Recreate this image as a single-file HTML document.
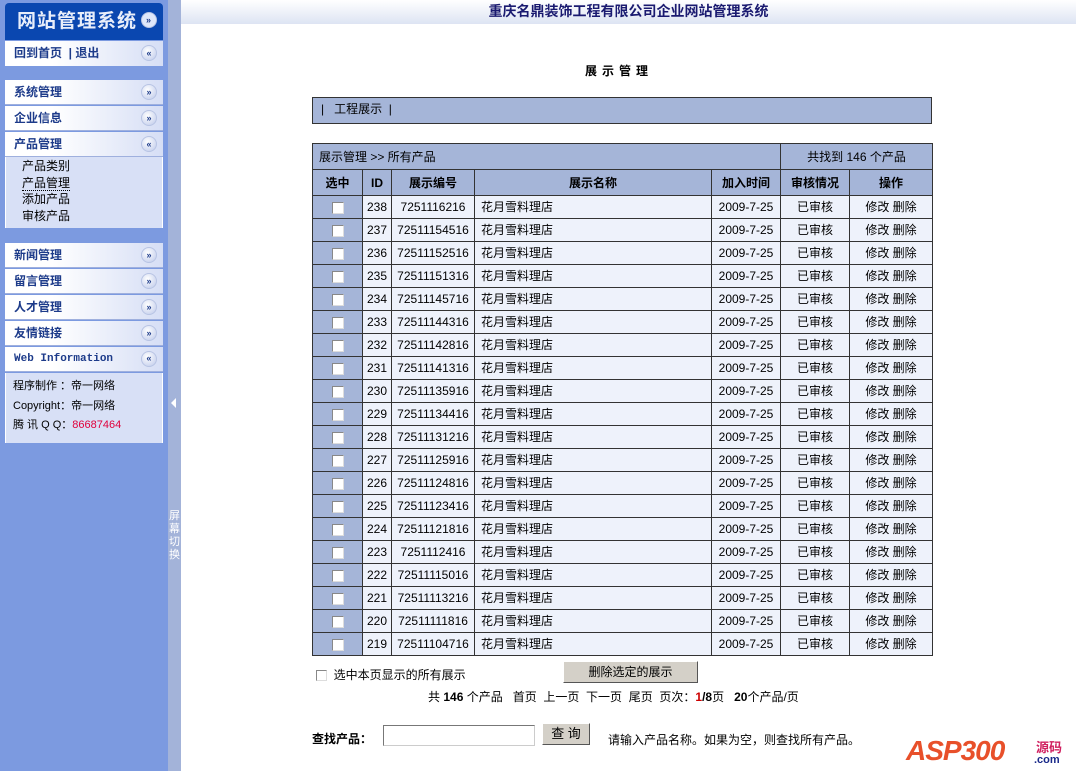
<!DOCTYPE html>
<html><head><meta charset="utf-8"><style>
*{margin:0;padding:0;box-sizing:border-box}
body{width:1076px;height:771px;overflow:hidden;background:#fff;font:12px "Liberation Sans","Noto Sans CJK SC",sans-serif;color:#000;position:relative}
#side{position:absolute;left:0;top:0;width:168px;height:771px;background:#7c9ae0}
#sep{position:absolute;left:168px;top:0;width:13px;height:771px;background:#a3b3d9;color:#fff}
#sep .t{position:absolute;left:1px;top:510px;width:12px;font-size:11px;line-height:13px}
#sep .a{position:absolute;left:3px;top:398px;width:0;height:0;border-top:5px solid transparent;border-bottom:5px solid transparent;border-right:5px solid #fff}
.hd{position:absolute;left:5px;top:3px;width:158px;height:37px;background:#0a47b0;border-radius:4px 4px 0 0;color:#e8eefa;font-size:19px;font-weight:bold;line-height:37px;padding-left:12px;letter-spacing:1px}
.item{position:absolute;left:5px;width:158px;height:25px;background:linear-gradient(90deg,#fff 30%,#d6def5);border-bottom:1px solid #9fb0de;font-weight:bold;color:#1d3b8a;font-size:12px;line-height:25px;padding-left:9px}
.ic{position:absolute;right:6px;top:4px;width:16px;height:16px;border-radius:50%;background:radial-gradient(circle at 40% 35%,#fff,#bcc8ea);border:1px solid #b8c4e4;font-size:9px;line-height:14px;text-align:center;color:#1d3b8a}
.hd .ic{top:9px;background:#dfe7fa}
.sub{position:absolute;left:5px;width:158px;background:#d8e0f6;border-left:1px solid #fff;border-right:1px solid #fff}
#top{position:absolute;left:181px;top:0;width:895px;height:24px;background:linear-gradient(#fff,#dde4f3);text-align:center;font-weight:bold;font-size:14px;color:#1a1a70;line-height:22px}
table{border-collapse:collapse;table-layout:fixed}
#bar{position:absolute;left:312px;top:97px;width:620px;height:27px;background:#a5b5d8;border:1px solid #333;line-height:23px;padding-left:8px}
#tb{position:absolute;left:312px;top:143px;width:620px}
#tb td{border:1px solid #333;height:23px;padding:0;line-height:14px;text-align:center;font-size:12px;background:#eef2fb;white-space:nowrap;overflow:hidden}
#tb tr.h td{background:#a5b5d8;font-weight:bold;height:26px}
#tb tr.h2 td{height:26px}
#tb td.c{background:#a5b5d8}
#tb td.l{text-align:left;padding-left:6px}
.cb{display:inline-block;width:12px;height:12px;background:#fff;border:1px solid #888;border-right-color:#ddd;border-bottom-color:#ddd;vertical-align:middle}
</style></head><body>
<div id="side">
<div class="hd">网站管理系统<span class="ic">»</span></div>
<div class="item" style="top:41px;border-bottom:none">回到首页 &nbsp;| 退出<span class="ic">«</span></div>
<div class="item" style="top:80px">系统管理<span class="ic">»</span></div>
<div class="item" style="top:106px">企业信息<span class="ic">»</span></div>
<div class="item" style="top:132px">产品管理<span class="ic">«</span></div>
<div class="sub" style="top:157px;height:71px;padding:1px 0 0 16px;font-size:12px;line-height:16.5px">产品类别<br><span style="border-bottom:1px dotted #000">产品管理</span><br>添加产品<br>审核产品</div>
<div class="item" style="top:243px">新闻管理<span class="ic">»</span></div>
<div class="item" style="top:269px">留言管理<span class="ic">»</span></div>
<div class="item" style="top:295px">人才管理<span class="ic">»</span></div>
<div class="item" style="top:321px">友情链接<span class="ic">»</span></div>
<div class="item" style="top:347px;font-family:'Liberation Mono',monospace;font-size:11px">Web Information<span class="ic">«</span></div>
<div class="sub" style="top:373px;height:70px;padding:4px 0 0 7px;font-size:11px;line-height:19.5px">程序制作 ：帝一网络<br>Copyright：帝一网络<br>腾 讯 Q Q：<span style="color:#e0003c">86687464</span></div>
</div>
<div id="sep"><div class="a"></div><div class="t">屏幕切换</div></div>
<div id="top">重庆名鼎装饰工程有限公司企业网站管理系统</div>
<div style="position:absolute;left:585px;top:62px;font-weight:bold;letter-spacing:5px">展示管理</div>
<div id="bar">|&nbsp;&nbsp; 工程展示 &nbsp;|</div>
<table id="tb">
<colgroup><col style="width:50px"><col style="width:29px"><col style="width:83px"><col style="width:237px"><col style="width:69px"><col style="width:69px"><col style="width:83px"></colgroup>
<tr class="h"><td colspan="5" class="l" style="font-weight:normal">展示管理 &gt;&gt; 所有产品</td><td colspan="2" style="font-weight:normal">共找到 146 个产品</td></tr>
<tr class="h"><td>选中</td><td>ID</td><td>展示编号</td><td>展示名称</td><td>加入时间</td><td>审核情况</td><td>操作</td></tr>
<tr><td class="c"><span class="cb"></span></td><td>238</td><td>7251116216</td><td class="l">花月雪料理店</td><td>2009-7-25</td><td>已审核</td><td>修改 删除</td></tr>
<tr><td class="c"><span class="cb"></span></td><td>237</td><td>72511154516</td><td class="l">花月雪料理店</td><td>2009-7-25</td><td>已审核</td><td>修改 删除</td></tr>
<tr><td class="c"><span class="cb"></span></td><td>236</td><td>72511152516</td><td class="l">花月雪料理店</td><td>2009-7-25</td><td>已审核</td><td>修改 删除</td></tr>
<tr><td class="c"><span class="cb"></span></td><td>235</td><td>72511151316</td><td class="l">花月雪料理店</td><td>2009-7-25</td><td>已审核</td><td>修改 删除</td></tr>
<tr><td class="c"><span class="cb"></span></td><td>234</td><td>72511145716</td><td class="l">花月雪料理店</td><td>2009-7-25</td><td>已审核</td><td>修改 删除</td></tr>
<tr><td class="c"><span class="cb"></span></td><td>233</td><td>72511144316</td><td class="l">花月雪料理店</td><td>2009-7-25</td><td>已审核</td><td>修改 删除</td></tr>
<tr><td class="c"><span class="cb"></span></td><td>232</td><td>72511142816</td><td class="l">花月雪料理店</td><td>2009-7-25</td><td>已审核</td><td>修改 删除</td></tr>
<tr><td class="c"><span class="cb"></span></td><td>231</td><td>72511141316</td><td class="l">花月雪料理店</td><td>2009-7-25</td><td>已审核</td><td>修改 删除</td></tr>
<tr><td class="c"><span class="cb"></span></td><td>230</td><td>72511135916</td><td class="l">花月雪料理店</td><td>2009-7-25</td><td>已审核</td><td>修改 删除</td></tr>
<tr><td class="c"><span class="cb"></span></td><td>229</td><td>72511134416</td><td class="l">花月雪料理店</td><td>2009-7-25</td><td>已审核</td><td>修改 删除</td></tr>
<tr><td class="c"><span class="cb"></span></td><td>228</td><td>72511131216</td><td class="l">花月雪料理店</td><td>2009-7-25</td><td>已审核</td><td>修改 删除</td></tr>
<tr><td class="c"><span class="cb"></span></td><td>227</td><td>72511125916</td><td class="l">花月雪料理店</td><td>2009-7-25</td><td>已审核</td><td>修改 删除</td></tr>
<tr><td class="c"><span class="cb"></span></td><td>226</td><td>72511124816</td><td class="l">花月雪料理店</td><td>2009-7-25</td><td>已审核</td><td>修改 删除</td></tr>
<tr><td class="c"><span class="cb"></span></td><td>225</td><td>72511123416</td><td class="l">花月雪料理店</td><td>2009-7-25</td><td>已审核</td><td>修改 删除</td></tr>
<tr><td class="c"><span class="cb"></span></td><td>224</td><td>72511121816</td><td class="l">花月雪料理店</td><td>2009-7-25</td><td>已审核</td><td>修改 删除</td></tr>
<tr><td class="c"><span class="cb"></span></td><td>223</td><td>7251112416</td><td class="l">花月雪料理店</td><td>2009-7-25</td><td>已审核</td><td>修改 删除</td></tr>
<tr><td class="c"><span class="cb"></span></td><td>222</td><td>72511115016</td><td class="l">花月雪料理店</td><td>2009-7-25</td><td>已审核</td><td>修改 删除</td></tr>
<tr><td class="c"><span class="cb"></span></td><td>221</td><td>72511113216</td><td class="l">花月雪料理店</td><td>2009-7-25</td><td>已审核</td><td>修改 删除</td></tr>
<tr><td class="c"><span class="cb"></span></td><td>220</td><td>72511111816</td><td class="l">花月雪料理店</td><td>2009-7-25</td><td>已审核</td><td>修改 删除</td></tr>
<tr><td class="c"><span class="cb"></span></td><td>219</td><td>72511104716</td><td class="l">花月雪料理店</td><td>2009-7-25</td><td>已审核</td><td>修改 删除</td></tr>
</table>
<div style="position:absolute;left:316px;top:666px"><span class="cb" style="width:11px;height:11px"></span>&nbsp; 选中本页显示的所有展示</div>
<div style="position:absolute;left:563px;top:661px;width:135px;height:22px;background:#d4d0c8;border:1px solid;border-color:#fff #555 #555 #fff;text-align:center;line-height:20px">删除选定的展示</div>
<div style="position:absolute;left:428px;top:688px">共 <b>146</b> 个产品 &nbsp; 首页 &nbsp;上一页 &nbsp;下一页 &nbsp;尾页 &nbsp;页次：<b style="color:#c00">1</b><b>/8</b>页 &nbsp; <b>20</b>个产品/页</div>
<div style="position:absolute;left:312px;top:730px;font-weight:bold">查找产品：</div>
<div style="position:absolute;left:383px;top:725px;width:152px;height:21px;border:1px solid #777;border-right-color:#ccc;border-bottom-color:#ccc;background:#fff"></div>
<div style="position:absolute;left:542px;top:723px;width:48px;height:22px;background:#d4d0c8;border:1px solid;border-color:#fff #555 #555 #fff;text-align:center;line-height:20px;font-size:13px">查 询</div>
<div style="position:absolute;left:608px;top:731px">请输入产品名称。如果为空，则查找所有产品。</div>
<div style="position:absolute;left:906px;top:735px;font:italic bold 28px 'Liberation Sans',sans-serif;color:#e8502a;letter-spacing:-1px">ASP300</div>
<div style="position:absolute;left:1036px;top:737px;font-weight:bold;font-size:13px;color:#d02060">源码</div>
<div style="position:absolute;left:1034px;top:754px;font-weight:bold;font-size:11px;color:#1a2a8a">.com</div>
</body></html>
